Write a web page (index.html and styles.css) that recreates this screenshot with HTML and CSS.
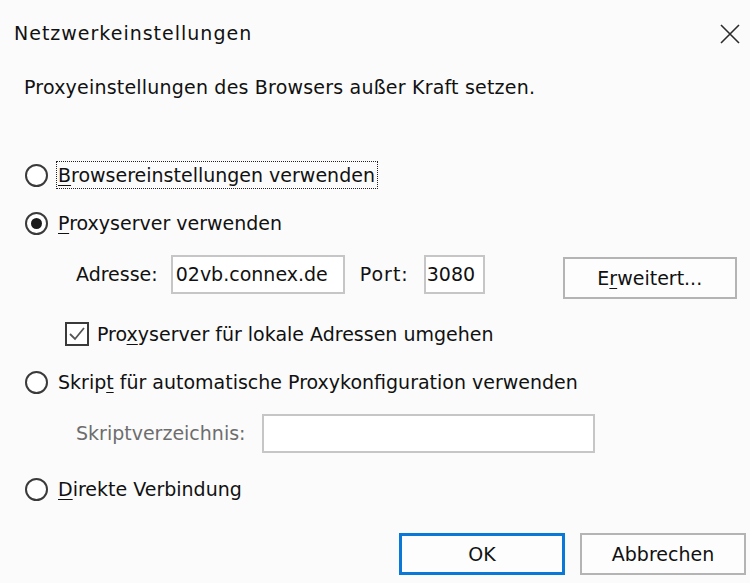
FILE: index.html
```html
<!DOCTYPE html>
<html lang="de">
<head>
<meta charset="utf-8">
<title>Netzwerkeinstellungen</title>
<link rel="stylesheet" href="styles.css">
</head>
<body>
<div class="dialog">
  <header class="titlebar">
    <h1 class="title">Netzwerkeinstellungen</h1>
    <span class="close" aria-label="Schließen">
      <svg width="22" height="20" viewBox="0 0 22 20"><path d="M2 1 L20 19 M20 1 L2 19" stroke="#2b2b2b" stroke-width="1.6" fill="none"/></svg>
    </span>
  </header>

  <p class="intro">Proxyeinstellungen des Browsers außer Kraft setzen.</p>

  <div class="row radio-row first">
    <span class="radio"></span>
    <span class="label focused"><u>B</u>rowsereinstellungen verwenden</span>
  </div>

  <div class="row radio-row gap-s">
    <span class="radio checked"></span>
    <span class="label"><u>P</u>roxyserver verwenden</span>
  </div>

  <div class="proxy-row">
    <span class="field-label">Adresse:</span>
    <span class="field addr">02vb.connex.de</span>
    <span class="field-label port-label">Port:</span>
    <span class="field port">3080</span>
    <span class="btn ext">E<u>r</u>weitert...</span>
  </div>

  <div class="row check-row">
    <span class="checkbox">
      <svg width="20" height="20" viewBox="0 0 20 20"><path d="M3 10 L8 15 L17 4" stroke="#555" stroke-width="1.8" fill="none"/></svg>
    </span>
    <span class="label">Pro<u>x</u>yserver für lokale Adressen umgehen</span>
  </div>

  <div class="row radio-row gap-s">
    <span class="radio"></span>
    <span class="label">Skrip<u>t</u> für automatische Proxykonfiguration verwenden</span>
  </div>

  <div class="script-row">
    <span class="field-label disabled">Skriptverzeichnis:</span>
    <span class="field script"></span>
  </div>

  <div class="row radio-row gap-m">
    <span class="radio"></span>
    <span class="label"><u>D</u>irekte Verbindung</span>
  </div>

  <footer class="actions">
    <span class="btn ok">OK</span>
    <span class="btn">Abbrechen</span>
  </footer>
</div>
</body>
</html>
```

FILE: styles.css
```css
html, body {
  margin: 0;
  padding: 0;
  background: #fbfbfb;
}

body {
  font-family: "DejaVu Sans", Verdana, sans-serif;
  font-size: 19px;
  color: #111;
  width: 750px;
  height: 583px;
  overflow: hidden;
}

u {
  text-decoration: underline;
  text-underline-offset: 3px;
  text-decoration-thickness: 1px;
}

.dialog {
  display: flex;
  flex-direction: column;
}

/* title bar */
.titlebar {
  display: flex;
  align-items: center;
  justify-content: space-between;
  padding: 21px 9px 0 14px;
  height: 24px;
}

.title {
  margin: 0;
  font-size: 19px;
  font-weight: normal;
  line-height: 24px;
  letter-spacing: 1px;
}

.close {
  display: flex;
  margin-top: 2px;
}

.intro {
  margin: 30px 0 0 24px;
  line-height: 24px;
  letter-spacing: 0.2px;
}

/* option rows */
.row {
  display: flex;
  align-items: center;
  height: 28px;
}

.radio-row {
  padding-left: 25px;
}

.first {
  margin-top: 62px;
}

.gap-s {
  margin-top: 20px;
}

.gap-m {
  margin-top: 21px;
}

.radio {
  box-sizing: border-box;
  width: 23px;
  height: 23px;
  border: 2px solid #3a3a3a;
  border-radius: 50%;
  background: #fff;
  margin-right: 10px;
  display: flex;
  align-items: center;
  justify-content: center;
  flex: none;
}

.radio.checked::after {
  content: "";
  width: 11px;
  height: 11px;
  border-radius: 50%;
  background: #1a1a1a;
}

.label {
  line-height: 24px;
  white-space: nowrap;
}

.focused {
  outline: 1px dotted #222;
  outline-offset: 1px;
  padding-right: 1px;
}

/* address / port */
.proxy-row {
  display: flex;
  align-items: flex-start;
  margin-top: 18px;
  padding-left: 76px;
  height: 44px;
}

.field-label {
  line-height: 39px;
  white-space: nowrap;
}

.field {
  box-sizing: border-box;
  height: 39px;
  border: 2px solid #c6c6c6;
  background: #fff;
  line-height: 35px;
  white-space: nowrap;
  overflow: hidden;
}

.addr {
  width: 174px;
  margin-left: 13px;
  padding-left: 3px;
}

.port-label {
  margin-left: 15px;
  letter-spacing: 1px;
}

.port {
  width: 61px;
  margin-left: 15px;
  padding-left: 1px;
}

.btn {
  box-sizing: border-box;
  display: flex;
  align-items: center;
  justify-content: center;
  height: 42px;
  border: 2px solid #b4b4b4;
  background: #fdfdfd;
  white-space: nowrap;
}

.ext {
  width: 174px;
  margin-left: 78px;
  margin-top: 2px;
}

/* bypass checkbox */
.check-row {
  margin-top: 21px;
  padding-left: 65px;
}

.checkbox {
  box-sizing: border-box;
  width: 24px;
  height: 24px;
  border: 2px solid #3a3a3a;
  background: #fff;
  display: flex;
  align-items: center;
  justify-content: center;
  margin-right: 8px;
  flex: none;
}

/* script path */
.script-row {
  display: flex;
  margin-top: 18px;
  padding-left: 76px;
  height: 40px;
}

.disabled {
  color: #6d6d6d;
}

.script {
  width: 333px;
  margin-left: 17px;
}

/* dialog buttons */
.actions {
  display: flex;
  justify-content: flex-end;
  gap: 15px;
  margin-top: 30px;
  padding-right: 4px;
}

.actions .btn {
  width: 166px;
  height: 42px;
}

.ok {
  border: 3px solid #0a78d7;
}
```
